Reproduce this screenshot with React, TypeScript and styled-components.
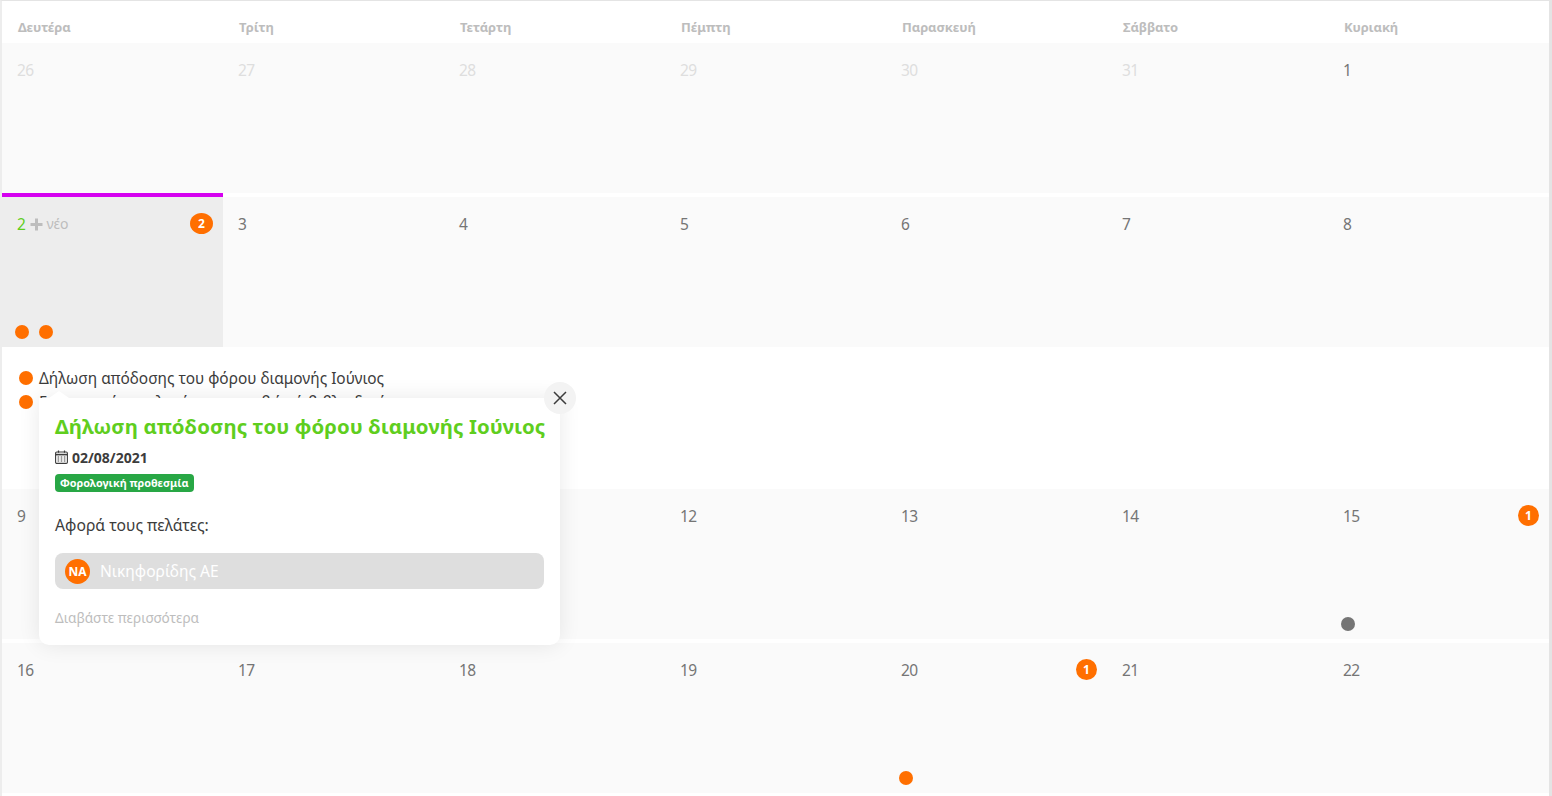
import React from "react";
import styled, { createGlobalStyle } from "styled-components";

const Global = createGlobalStyle`
  html, body { margin: 0; padding: 0; background: #fff; }
  body { font-family: "Noto Sans", "Open Sans", sans-serif; overflow: hidden; }
`;

const Page = styled.div`
  width: 1552px;
  height: 796px;
  box-sizing: border-box;
  border-top: 1px solid #e4e4e4;
  border-left: 2px solid #ededed;
  border-right: 3px solid #e4e4e4;
  overflow: hidden;
`;

const Week = styled.div`
  display: grid;
  grid-template-columns: repeat(7, 221px);
`;

const HeaderCell = styled.div`
  height: 42px;
  box-sizing: border-box;
  padding: 17px 0 0 16px;
  font-size: 13px;
  line-height: 18px;
  font-weight: 700;
  color: #bdbdbd;
  letter-spacing: -0.1px;
`;

const BodyWeek = styled(Week)<{ $gap?: boolean }>`
  margin-bottom: ${(p) => (p.$gap ? "4px" : "0")};
`;

const Cell = styled.div<{ $selected?: boolean }>`
  position: relative;
  height: 150px;
  box-sizing: border-box;
  padding: 18px 10px 0 15px;
  display: flex;
  align-items: flex-start;
  background: ${(p) => (p.$selected ? "#ededed" : "#fafafa")};
`;

const Accent = styled.div`
  position: absolute;
  left: 0;
  right: 0;
  top: -4px;
  height: 4px;
  background: #d500f0;
`;

const DayNumber = styled.span<{ $tone?: "muted" | "today" }>`
  font-size: 15.5px;
  line-height: 18px;
  letter-spacing: -0.5px;
  color: ${(p) =>
    p.$tone === "muted" ? "#dedede" : p.$tone === "today" ? "#5fce1e" : "#757575"};
  font-weight: 400;
`;

const NewAction = styled.span`
  display: inline-flex;
  align-items: center;
  margin-left: 5px;
  gap: 3px;
  font-size: 14px;
  line-height: 18px;
  color: #bdbdbd;
`;

const CountBadge = styled.span<{ $wide?: boolean }>`
  margin-left: auto;
  width: ${(p) => (p.$wide ? "23px" : "21px")};
  height: 21px;
  margin-top: -2px;
  border-radius: 50%;
  background: #ff6f00;
  color: #fff;
  font-size: 12px;
  font-weight: 700;
  line-height: 21px;
  text-align: center;
`;

const DotRow = styled.div`
  position: absolute;
  left: 13px;
  bottom: 8px;
  display: flex;
  gap: 10px;
`;

const Dot = styled.span<{ $grey?: boolean }>`
  display: block;
  flex: none;
  width: 14px;
  height: 14px;
  border-radius: 50%;
  background: ${(p) => (p.$grey ? "#757575" : "#ff6f00")};
`;

const Details = styled.div`
  position: relative;
  height: 142px;
  box-sizing: border-box;
  padding: 19px 0 0 17px;
  background: #fff;
`;

const EventRow = styled.div`
  display: flex;
  align-items: center;
  gap: 6px;
  height: 24px;
  font-size: 15.4px;
  color: #3c3c3c;
`;

const Popup = styled.div`
  position: absolute;
  left: 37px;
  top: 51px;
  width: 521px;
  height: 247px;
  box-sizing: border-box;
  padding: 12px 16px 0;
  background: #fff;
  border-radius: 0 0 10px 10px;
  box-shadow: 0 0 22px rgba(0, 0, 0, 0.09);
  z-index: 2;
  &::before {
    content: "";
    position: absolute;
    left: 10px;
    top: -7px;
    border-left: 10px solid transparent;
    border-right: 10px solid transparent;
    border-bottom: 7px solid #fff;
  }
`;

const CloseButton = styled.button`
  position: absolute;
  top: -16px;
  right: -16px;
  width: 32px;
  height: 32px;
  padding: 0;
  border: 0;
  border-radius: 50%;
  background: #f3f3f3;
  display: flex;
  align-items: center;
  justify-content: center;
`;

const Title = styled.div`
  font-size: 20.4px;
  line-height: 32px;
  font-weight: 700;
  color: #5fce1e;
  white-space: nowrap;
  letter-spacing: 0.1px;
`;

const DateRow = styled.div`
  display: flex;
  align-items: center;
  gap: 4px;
  margin-top: 5px;
  height: 20px;
  font-size: 14px;
  font-weight: 700;
  color: #3c3c3c;
`;

const Tag = styled.span`
  display: inline-block;
  margin-top: 7px;
  padding: 0 5px;
  height: 18px;
  border-radius: 4px;
  background: #28a745;
  color: #fff;
  font-size: 10.85px;
  line-height: 18px;
  font-weight: 700;
  vertical-align: top;
`;

const Concern = styled.div`
  margin-top: 22px;
  font-size: 15.7px;
  line-height: 22px;
  color: #3c3c3c;
`;

const ClientBar = styled.div`
  display: flex;
  align-items: center;
  gap: 10px;
  margin-top: 17px;
  height: 36px;
  padding-left: 10px;
  border-radius: 8px;
  background: #dedede;
  color: #fff;
  font-size: 15.6px;
`;

const Avatar = styled.span`
  width: 25px;
  height: 25px;
  border-radius: 50%;
  background: #ff6f00;
  color: #fff;
  font-size: 12px;
  font-weight: 700;
  line-height: 25px;
  text-align: center;
`;

const ReadMore = styled.div`
  margin-top: 20px;
  font-size: 13.6px;
  line-height: 18px;
  color: #bdbdbd;
`;

const days = ["Δευτέρα", "Τρίτη", "Τετάρτη", "Πέμπτη", "Παρασκευή", "Σάββατο", "Κυριακή"];

const Plus = () => (
  <svg width="13" height="13" viewBox="0 0 13 13" aria-hidden="true">
    <path d="M6.5 0.5v12M0.5 6.5h12" stroke="#bdbdbd" strokeWidth="3" fill="none" />
  </svg>
);

const CalendarIcon = () => (
  <svg width="13" height="14" viewBox="0 0 13 14" aria-hidden="true" fill="none" stroke="#3c3c3c">
    <rect x="0.6" y="2" width="11.8" height="11.4" rx="1.2" strokeWidth="1.1" />
    <path d="M0.8 4.6h11.4" strokeWidth="1.6" />
    <path d="M3.5 0.4v2.4M9.5 0.4v2.4" strokeWidth="1.2" />
    <path d="M2.6 7h1.6M5.7 7h1.6M8.8 7h1.6M2.6 9h1.6M5.7 9h1.6M8.8 9h1.6M2.6 11h1.6M5.7 11h1.6M8.8 11h1.6" strokeWidth="1.1" />
  </svg>
);

const CloseIcon = () => (
  <svg width="14" height="14" viewBox="0 0 14 14" aria-hidden="true">
    <path d="M1 1l12 12M13 1L1 13" stroke="#3c3c3c" strokeWidth="1.5" fill="none" />
  </svg>
);

export default function App() {
  return (
    <Page>
      <Global />
      <Week>
        {days.map((d) => (
          <HeaderCell key={d}>{d}</HeaderCell>
        ))}
      </Week>

      <BodyWeek $gap>
        {["26", "27", "28", "29", "30", "31"].map((n) => (
          <Cell key={n}>
            <DayNumber $tone="muted">{n}</DayNumber>
          </Cell>
        ))}
        <Cell>
          <DayNumber>1</DayNumber>
        </Cell>
      </BodyWeek>

      <BodyWeek>
        <Cell $selected>
          <Accent />
          <DayNumber $tone="today">2</DayNumber>
          <NewAction>
            <Plus />
            νέο
          </NewAction>
          <CountBadge $wide>2</CountBadge>
          <DotRow>
            <Dot />
            <Dot />
          </DotRow>
        </Cell>
        {["3", "4", "5", "6", "7", "8"].map((n) => (
          <Cell key={n}>
            <DayNumber>{n}</DayNumber>
          </Cell>
        ))}
      </BodyWeek>

      <Details>
        <EventRow>
          <Dot />
          Δήλωση απόδοσης του φόρου διαμονής Ιούνιος
        </EventRow>
        <EventRow>
          <Dot />
          Γνωστοποίηση ελαχίστων αμοιβών ή βιβλιοδετήσεων
        </EventRow>
        <Popup>
          <CloseButton aria-label="Κλείσιμο">
            <CloseIcon />
          </CloseButton>
          <Title>Δήλωση απόδοσης του φόρου διαμονής Ιούνιος</Title>
          <DateRow>
            <CalendarIcon />
            02/08/2021
          </DateRow>
          <Tag>Φορολογική προθεσμία</Tag>
          <Concern>Αφορά τους πελάτες:</Concern>
          <ClientBar>
            <Avatar>ΝΑ</Avatar>
            Νικηφορίδης ΑΕ
          </ClientBar>
          <ReadMore>Διαβάστε περισσότερα</ReadMore>
        </Popup>
      </Details>

      <BodyWeek $gap>
        <Cell>
          <DayNumber>9</DayNumber>
        </Cell>
        {["10", "11", "12", "13", "14"].map((n) => (
          <Cell key={n}>
            <DayNumber>{n}</DayNumber>
          </Cell>
        ))}
        <Cell>
          <DayNumber>15</DayNumber>
          <CountBadge>1</CountBadge>
          <DotRow>
            <Dot $grey />
          </DotRow>
        </Cell>
      </BodyWeek>

      <BodyWeek>
        {["16", "17", "18", "19"].map((n) => (
          <Cell key={n}>
            <DayNumber>{n}</DayNumber>
          </Cell>
        ))}
        <Cell>
          <DayNumber>20</DayNumber>
          <CountBadge>1</CountBadge>
          <DotRow>
            <Dot />
          </DotRow>
        </Cell>
        {["21", "22"].map((n) => (
          <Cell key={n}>
            <DayNumber>{n}</DayNumber>
          </Cell>
        ))}
      </BodyWeek>
    </Page>
  );
}
